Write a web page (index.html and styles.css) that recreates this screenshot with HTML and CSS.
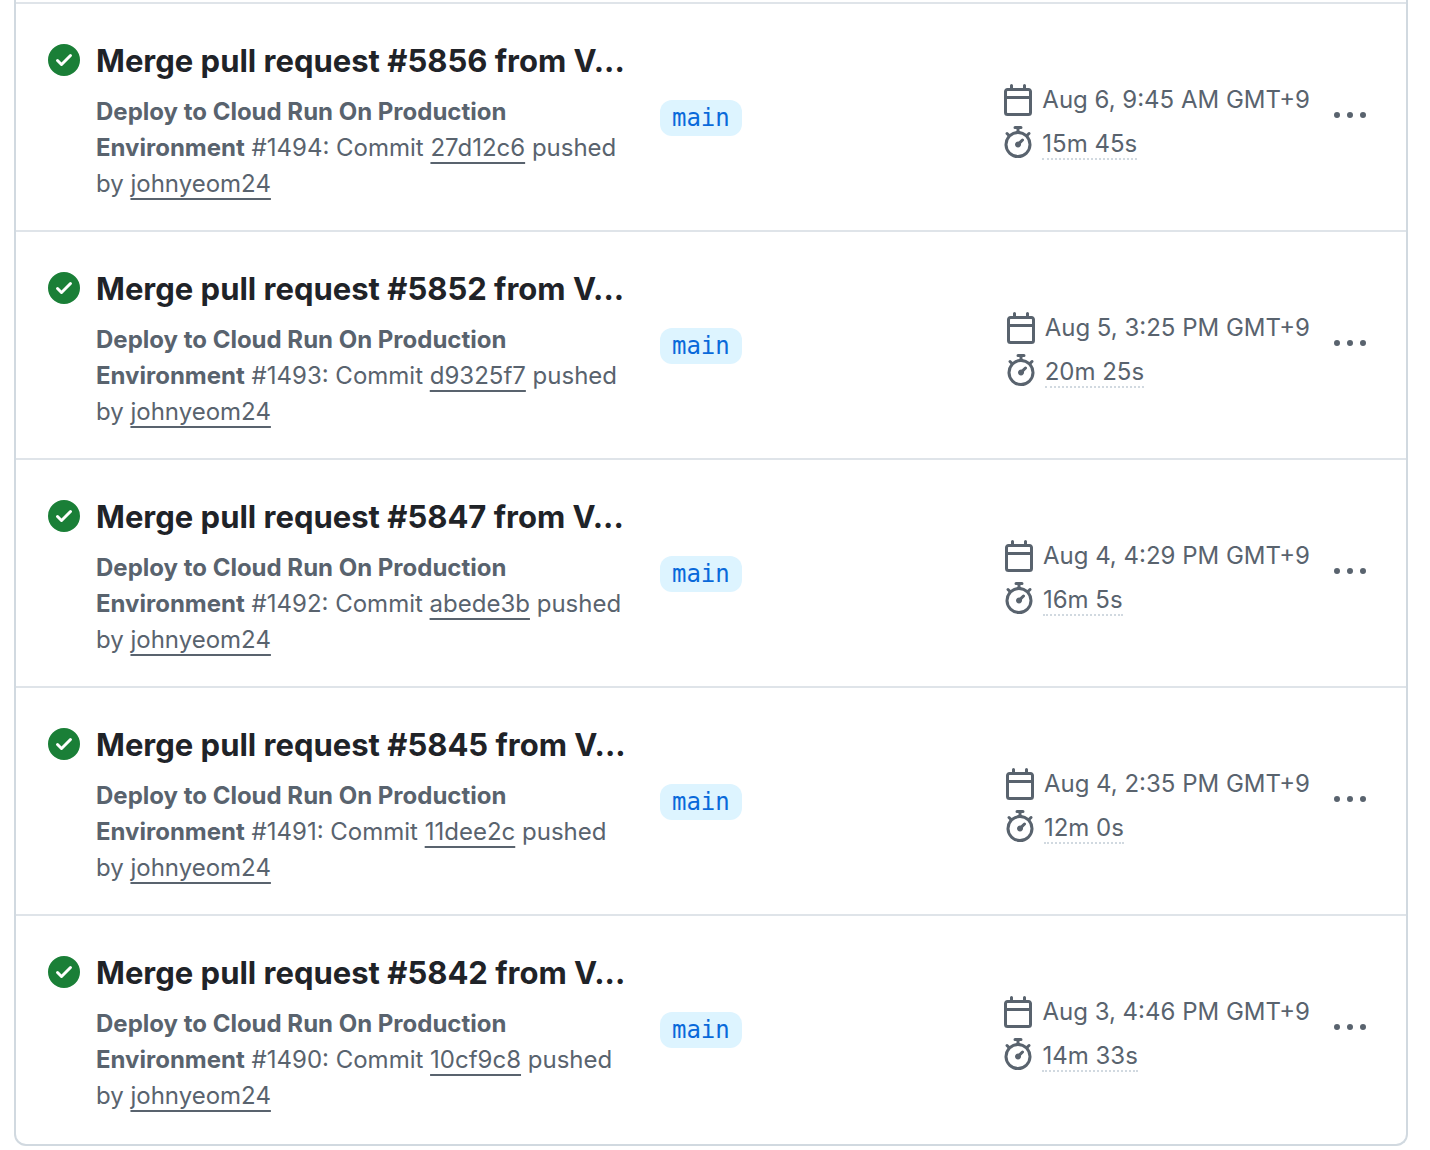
FILE: index.html
```html
<!DOCTYPE html>
<html lang="en">
<head>
  <meta charset="UTF-8">
  <meta name="viewport" content="width=device-width, initial-scale=1.0">
  <title>Workflow runs</title>
  <link rel="stylesheet" href="styles.css">
</head>
<body>
  <!-- Shared icons -->
  <svg class="sprite" aria-hidden="true">
    <symbol id="icon-check" viewBox="0 0 16 16">
      <path d="M8 16A8 8 0 1 1 8 0a8 8 0 0 1 0 16Zm3.78-9.72a.751.751 0 0 0-.018-1.042.751.751 0 0 0-1.042-.018L6.75 9.19 5.28 7.72a.751.751 0 0 0-1.042.018.751.751 0 0 0-.018 1.042l2 2a.75.75 0 0 0 1.06 0Z"/>
    </symbol>
    <symbol id="icon-calendar" viewBox="0 0 16 16">
      <path d="M4.75 0a.75.75 0 0 1 .75.75V2h5V.75a.75.75 0 0 1 1.5 0V2h1.25c.966 0 1.75.784 1.75 1.75v10.5A1.75 1.75 0 0 1 13.25 16H2.75A1.75 1.75 0 0 1 1 14.25V3.75C1 2.784 1.784 2 2.75 2H4V.75A.75.75 0 0 1 4.75 0ZM2.5 7.5v6.75c0 .138.112.25.25.25h10.5a.25.25 0 0 0 .25-.25V7.5Zm10.75-4H2.75a.25.25 0 0 0-.25.25V6h11V3.75a.25.25 0 0 0-.25-.25Z"/>
    </symbol>
    <symbol id="icon-stopwatch" viewBox="0 0 16 16">
      <path d="M5.75.75A.75.75 0 0 1 6.5 0h3a.75.75 0 0 1 0 1.5h-.75v1l-.001.041a6.724 6.724 0 0 1 3.464 1.435l.007-.006.75-.75a.749.749 0 0 1 1.275.326.749.749 0 0 1-.215.734l-.75.75-.006.007a6.75 6.75 0 1 1-10.548 0L2.72 5.03l-.75-.75a.751.751 0 0 1 .018-1.042.751.751 0 0 1 1.042-.018l.75.75.007.006A6.72 6.72 0 0 1 7.25 2.541V1.5H6.5a.75.75 0 0 1-.75-.75ZM8 14.5a5.25 5.25 0 1 0-.001-10.501A5.25 5.25 0 0 0 8 14.5Zm.389-6.7 1.33-1.33a.75.75 0 1 1 1.061 1.06L9.45 8.861A1.503 1.503 0 0 1 8 10.75a1.499 1.499 0 1 1 .389-2.95Z"/>
    </symbol>
    <symbol id="icon-kebab" viewBox="0 0 16 16">
      <path d="M8 9a1.5 1.5 0 1 0 0-3 1.5 1.5 0 0 0 0 3ZM1.5 9a1.5 1.5 0 1 0 0-3 1.5 1.5 0 0 0 0 3Zm13 0a1.5 1.5 0 1 0 0-3 1.5 1.5 0 0 0 0 3Z"/>
    </symbol>
  </svg>

  <main class="runs">
    <div class="run">
      <div class="run-info">
        <svg class="icon icon-success"><use href="#icon-check"/></svg>
        <div class="run-text">
          <a class="run-title" href="#5856">Merge pull request #5856 from V...</a>
          <p class="run-desc"><b>Deploy to Cloud Run On Production Environment</b> #1494: Commit <a href="#27d12c6">27d12c6</a> pushed by <a href="#johnyeom24">johnyeom24</a></p>
        </div>
      </div>
      <div class="run-branch"><a class="branch" href="#main">main</a></div>
      <div class="run-meta">
        <div class="meta-line"><svg class="icon"><use href="#icon-calendar"/></svg><span>Aug 6, 9:45 AM GMT+9</span></div>
        <div class="meta-line duration"><svg class="icon"><use href="#icon-stopwatch"/></svg><a href="#usage-1494">15m 45s</a></div>
      </div>
      <button class="run-menu" type="button" aria-label="Show options"><svg class="icon"><use href="#icon-kebab"/></svg></button>
    </div>

    <div class="run">
      <div class="run-info">
        <svg class="icon icon-success"><use href="#icon-check"/></svg>
        <div class="run-text">
          <a class="run-title" href="#5852">Merge pull request #5852 from V...</a>
          <p class="run-desc"><b>Deploy to Cloud Run On Production Environment</b> #1493: Commit <a href="#d9325f7">d9325f7</a> pushed by <a href="#johnyeom24">johnyeom24</a></p>
        </div>
      </div>
      <div class="run-branch"><a class="branch" href="#main">main</a></div>
      <div class="run-meta">
        <div class="meta-line"><svg class="icon"><use href="#icon-calendar"/></svg><span>Aug 5, 3:25 PM GMT+9</span></div>
        <div class="meta-line duration"><svg class="icon"><use href="#icon-stopwatch"/></svg><a href="#usage-1493">20m 25s</a></div>
      </div>
      <button class="run-menu" type="button" aria-label="Show options"><svg class="icon"><use href="#icon-kebab"/></svg></button>
    </div>

    <div class="run">
      <div class="run-info">
        <svg class="icon icon-success"><use href="#icon-check"/></svg>
        <div class="run-text">
          <a class="run-title" href="#5847">Merge pull request #5847 from V...</a>
          <p class="run-desc"><b>Deploy to Cloud Run On Production Environment</b> #1492: Commit <a href="#abede3b">abede3b</a> pushed by <a href="#johnyeom24">johnyeom24</a></p>
        </div>
      </div>
      <div class="run-branch"><a class="branch" href="#main">main</a></div>
      <div class="run-meta">
        <div class="meta-line"><svg class="icon"><use href="#icon-calendar"/></svg><span>Aug 4, 4:29 PM GMT+9</span></div>
        <div class="meta-line duration"><svg class="icon"><use href="#icon-stopwatch"/></svg><a href="#usage-1492">16m 5s</a></div>
      </div>
      <button class="run-menu" type="button" aria-label="Show options"><svg class="icon"><use href="#icon-kebab"/></svg></button>
    </div>

    <div class="run">
      <div class="run-info">
        <svg class="icon icon-success"><use href="#icon-check"/></svg>
        <div class="run-text">
          <a class="run-title" href="#5845">Merge pull request #5845 from V...</a>
          <p class="run-desc"><b>Deploy to Cloud Run On Production Environment</b> #1491: Commit <a href="#11dee2c">11dee2c</a> pushed by <a href="#johnyeom24">johnyeom24</a></p>
        </div>
      </div>
      <div class="run-branch"><a class="branch" href="#main">main</a></div>
      <div class="run-meta">
        <div class="meta-line"><svg class="icon"><use href="#icon-calendar"/></svg><span>Aug 4, 2:35 PM GMT+9</span></div>
        <div class="meta-line duration"><svg class="icon"><use href="#icon-stopwatch"/></svg><a href="#usage-1491">12m 0s</a></div>
      </div>
      <button class="run-menu" type="button" aria-label="Show options"><svg class="icon"><use href="#icon-kebab"/></svg></button>
    </div>

    <div class="run">
      <div class="run-info">
        <svg class="icon icon-success"><use href="#icon-check"/></svg>
        <div class="run-text">
          <a class="run-title" href="#5842">Merge pull request #5842 from V...</a>
          <p class="run-desc"><b>Deploy to Cloud Run On Production Environment</b> #1490: Commit <a href="#10cf9c8">10cf9c8</a> pushed by <a href="#johnyeom24">johnyeom24</a></p>
        </div>
      </div>
      <div class="run-branch"><a class="branch" href="#main">main</a></div>
      <div class="run-meta">
        <div class="meta-line"><svg class="icon"><use href="#icon-calendar"/></svg><span>Aug 3, 4:46 PM GMT+9</span></div>
        <div class="meta-line duration"><svg class="icon"><use href="#icon-stopwatch"/></svg><a href="#usage-1490">14m 33s</a></div>
      </div>
      <button class="run-menu" type="button" aria-label="Show options"><svg class="icon"><use href="#icon-kebab"/></svg></button>
    </div>
  </main>
</body>
</html>
```
FILE: styles.css
```css
* {
  margin: 0;
  padding: 0;
  box-sizing: border-box;
}

body {
  font-family: Inter, "Liberation Sans", sans-serif;
  font-size: 24px;
  line-height: 36px;
  color: #59636e;
  background: #ffffff;
}

.sprite {
  display: none;
}

.icon {
  width: 32px;
  height: 32px;
  flex-shrink: 0;
  fill: currentColor;
}

.runs {
  margin: 0 22px 0 14px;
  padding: 2px 0;
  border: 2px solid #d1d9e0;
  border-top: none;
  border-radius: 0 0 12px 12px;
}

.run {
  display: grid;
  grid-template-columns: 46% 1fr auto auto;
  align-items: center;
  padding: 32px 32px 28px;
  border-top: 2px solid #dfe4e9;
}

.run-info {
  display: flex;
  gap: 16px;
  padding-right: 32px;
}

.icon-success {
  margin-top: 8px;
  color: #1a7f37;
}

.run-text {
  min-width: 0;
}

.run-title {
  display: block;
  margin-bottom: 8px;
  font-size: 31px;
  font-weight: 700;
  line-height: 50px;
  color: #1f2328;
  text-decoration: none;
  white-space: nowrap;
}

.run-desc b {
  font-weight: 700;
}

.run-desc a {
  color: inherit;
  text-decoration: underline;
  text-decoration-thickness: 2px;
  text-underline-offset: 6px;
  text-decoration-skip-ink: none;
}

.run-branch {
  display: flex;
  padding: 0 0 2px 2px;
}

.branch {
  padding: 0 12px;
  border-radius: 12px;
  font-family: "DejaVu Sans Mono", monospace;
  color: #0969da;
  background: #ddf4ff;
  text-decoration: none;
}

.run-meta {
  display: grid;
  gap: 8px;
  padding-top: 4px;
}

.meta-line {
  display: flex;
  align-items: center;
  gap: 8px;
}

.duration {
  align-items: flex-start;
}

.duration a {
  height: 34px;
  color: inherit;
  text-decoration: none;
  border-bottom: 2px dotted #d1d9e0;
}

.run-menu {
  display: flex;
  margin-left: 16px;
  padding: 8px 8px 14px;
  border: none;
  background: none;
  color: inherit;
  cursor: pointer;
}
```
